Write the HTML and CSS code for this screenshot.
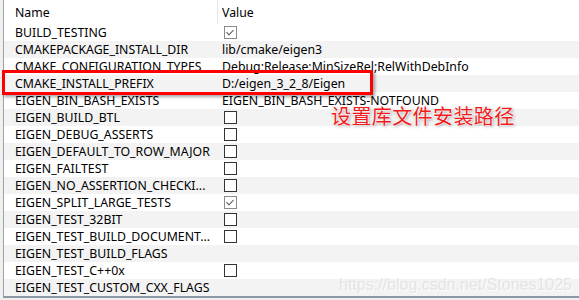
FILE: index.html
```html
<!DOCTYPE html>
<html lang="en">
  <head>
    <meta charset="UTF-8" />
    <meta name="viewport" content="width=device-width, initial-scale=1.0" />
    <title>CMake Cache</title>
    <link rel="stylesheet" href="styles.css">
  </head>
  <body>
    <div class="panel">
      <div class="grid">
        <div class="head">
          <div class="name">Name</div>
          <div class="value">Value</div>
        </div>

        <div class="row">
          <div class="name">BUILD_TESTING</div>
          <div class="value"><span class="box checked"></span></div>
        </div>
        <div class="row">
          <div class="name">CMAKEPACKAGE_INSTALL_DIR</div>
          <div class="value">lib/cmake/eigen3</div>
        </div>
        <div class="row">
          <div class="name">CMAKE_CONFIGURATION_TYPES</div>
          <div class="value">Debug;Release;MinSizeRel;RelWithDebInfo</div>
        </div>
        <div class="row">
          <div class="name">CMAKE_INSTALL_PREFIX</div>
          <div class="value">D:/eigen_3_2_8/Eigen</div>
        </div>
        <div class="row">
          <div class="name">EIGEN_BIN_BASH_EXISTS</div>
          <div class="value">EIGEN_BIN_BASH_EXISTS-NOTFOUND</div>
        </div>
        <div class="row">
          <div class="name">EIGEN_BUILD_BTL</div>
          <div class="value"><span class="box"></span></div>
        </div>
        <div class="row">
          <div class="name">EIGEN_DEBUG_ASSERTS</div>
          <div class="value"><span class="box"></span></div>
        </div>
        <div class="row">
          <div class="name">EIGEN_DEFAULT_TO_ROW_MAJOR</div>
          <div class="value"><span class="box"></span></div>
        </div>
        <div class="row">
          <div class="name">EIGEN_FAILTEST</div>
          <div class="value"><span class="box"></span></div>
        </div>
        <div class="row">
          <div class="name">EIGEN_NO_ASSERTION_CHECKI...</div>
          <div class="value"><span class="box"></span></div>
        </div>
        <div class="row">
          <div class="name">EIGEN_SPLIT_LARGE_TESTS</div>
          <div class="value"><span class="box checked"></span></div>
        </div>
        <div class="row">
          <div class="name">EIGEN_TEST_32BIT</div>
          <div class="value"><span class="box"></span></div>
        </div>
        <div class="row">
          <div class="name">EIGEN_TEST_BUILD_DOCUMENT...</div>
          <div class="value"><span class="box"></span></div>
        </div>
        <div class="row">
          <div class="name">EIGEN_TEST_BUILD_FLAGS</div>
          <div class="value"></div>
        </div>
        <div class="row">
          <div class="name">EIGEN_TEST_C++0x</div>
          <div class="value"><span class="box"></span></div>
        </div>
        <div class="row">
          <div class="name">EIGEN_TEST_CUSTOM_CXX_FLAGS</div>
          <div class="value"></div>
        </div>
      </div>

      <!-- annotation drawn over the screenshot -->
      <div class="highlight"></div>
      <div class="note">设置库文件安装路径</div>
      <div class="watermark">https://blog.csdn.net/Stones1025</div>
    </div>
  </body>
</html>
```

FILE: styles.css
```css
body {
  margin: 0;
  padding: 0;
  background-color: #f0f0f0;
  font-family: "Noto Sans", "Liberation Sans", sans-serif;
  font-size: 12.3px;
  color: #000;
}

.panel {
  position: relative;
  width: 579px;
  height: 300px;
  overflow: hidden;
}

.grid {
  margin-left: 3px;
  border-left: 1px solid #a0a0a0;
  border-bottom: 2px solid #8d97a5;
  background-color: #fff;
}

.head,
.row {
  display: flex;
  align-items: center;
}

.head {
  height: 24px;
}

.row {
  height: 17px;
}

.row:nth-child(odd) {
  background-color: #f3f3f3;
}

.name {
  width: 203px;
  padding-left: 11px;
  white-space: nowrap;
  overflow: hidden;
}

.value {
  padding-left: 4px;
  white-space: nowrap;
}

.head .name {
  height: 100%;
  display: flex;
  align-items: center;
  border-right: 1px solid #e5e5e5;
  box-sizing: border-box;
  width: 214px;
  padding-top: 1px;
}

.head .value {
  padding-left: 4px;
  padding-top: 1px;
}

.box {
  display: block;
  width: 11px;
  height: 11px;
  margin-left: 2px;
  border: 1px solid #333;
  background-color: #fff;
  position: relative;
}

.box.checked {
  border-color: #8a8a8a;
}

.box.checked::after {
  content: "";
  position: absolute;
  left: 3px;
  top: 1px;
  width: 3px;
  height: 6px;
  border-right: 1.5px solid #5a5a5a;
  border-bottom: 1.5px solid #5a5a5a;
  transform: rotate(45deg);
}

.highlight {
  position: absolute;
  left: 2px;
  top: 70px;
  width: 365px;
  height: 19px;
  border: 3px solid #f00;
  box-shadow: 2px 2px 3px rgba(0, 0, 0, 0.35);
}

.note {
  position: absolute;
  left: 331px;
  top: 106px;
  font-family: "Noto Sans CJK SC", sans-serif;
  font-size: 20px;
  line-height: 20px;
  color: #f21b1b;
  letter-spacing: 0.4px;
  text-shadow: 0 0 2px #fff, 0 0 2px #fff, 0 0 2px #fff, 1px 1px 3px rgba(0, 0, 0, 0.5);
}

.watermark {
  position: absolute;
  left: 339px;
  top: 276px;
  font-family: "Liberation Sans", Arial, sans-serif;
  font-size: 16px;
  color: #e4e4e4;
  text-shadow: 1px 1px 1px #fff;
}
```
